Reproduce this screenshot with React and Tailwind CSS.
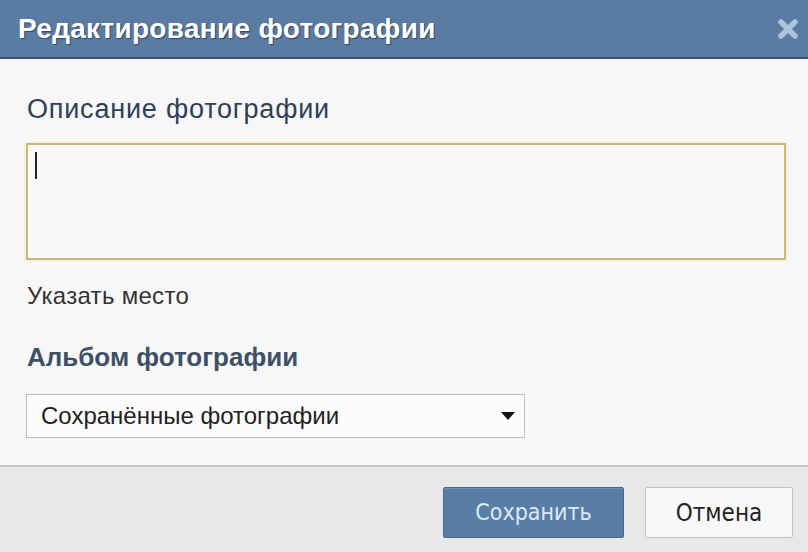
import { useState } from "react";

function CloseIcon() {
  return (
    <svg width="24" height="24" viewBox="0 0 24 24">
      <path
        d="M5 5 L19 19 M19 5 L5 19"
        stroke="#aec2da"
        strokeWidth="5.5"
        strokeLinecap="round"
      />
    </svg>
  );
}

export default function App() {
  const [description, setDescription] = useState("");
  const [album, setAlbum] = useState("saved");

  return (
    <div
      className="w-[808px] h-[552px] flex flex-col bg-[#f7f7f7] overflow-hidden"
      style={{ fontFamily: '"Liberation Sans", Arial, sans-serif' }}
    >
      <header className="h-[59px] shrink-0 flex items-center justify-between pl-[18px] pr-[8px] bg-[#5a7ba2] border-b-2 border-[#3b526e]">
        <h1 className="text-[28px] leading-[34px] font-bold text-white tracking-[0.3px] [text-shadow:1px_1px_1px_rgba(30,50,80,0.7)]">
          Редактирование фотографии
        </h1>
        <CloseIcon />
      </header>

      <main className="flex-1 flex flex-col px-[26px] pt-[34px]">
        <label
          htmlFor="description"
          className="text-[27px] leading-[32px] tracking-[0.8px] text-[#2c4059] ml-[1px]"
        >
          Описание фотографии
        </label>
        <div className="relative mt-[18px] mr-[-4px]">
          <textarea
            id="description"
            className="block w-[760px] h-[117px] resize-none bg-[#f9f9f8] border-2 border-[#c9b979] outline-none shadow-[0_0_3px_rgba(240,220,120,0.6)] px-[8px] py-[6px] text-[18px]"
            value={description}
            onChange={(e) => setDescription(e.target.value)}
          />
          <span className="absolute left-[9px] top-[9px] w-[2px] h-[27px] bg-[#222]" />
        </div>

        <span className="mt-[21px] ml-[1px] text-[24px] leading-[30px] tracking-[0.3px] text-[#333]">
          Указать место
        </span>

        <span className="mt-[30px] ml-[1px] text-[26px] leading-[32px] font-bold text-[#3d5068]">
          Альбом фотографии
        </span>

        <div className="relative mt-[21px] w-[499px] h-[44px] border border-[#bdbdbd] bg-[#fbfbfb] flex items-center justify-between pl-[14px] pr-[8px]">
          <span className="text-[24px] text-[#222]">
            {album === "saved" ? "Сохранённые фотографии" : album}
          </span>
          <svg width="16" height="10" viewBox="0 0 16 10">
            <path d="M1 1 L15 1 L8 9 Z" fill="#111" />
          </svg>
          <select
            className="absolute inset-0 opacity-0"
            value={album}
            onChange={(e) => setAlbum(e.target.value)}
          >
            <option value="saved">Сохранённые фотографии</option>
          </select>
        </div>
      </main>

      <footer className="h-[87px] shrink-0 flex items-start justify-end gap-[21px] pt-[20px] pr-[15px] bg-[#e9e8e8] border-t-2 border-[#c6c6c6]">
        <button
          className="w-[181px] h-[51px] bg-[#5a7da6] border border-[#46688f] rounded-[2px] text-[23px] text-[#dceaf6] shadow-[inset_0_1px_0_rgba(255,255,255,0.15)]"
          style={{ fontFamily: '"DejaVu Sans Condensed", "DejaVu Sans", sans-serif' }}
        >
          Сохранить
        </button>
        <button
          className="w-[148px] h-[51px] bg-[#f8f8f8] border border-[#c2c2c2] rounded-[2px] text-[24px] text-[#222]"
          style={{ fontFamily: '"DejaVu Sans Condensed", "DejaVu Sans", sans-serif' }}
        >
          Отмена
        </button>
      </footer>
    </div>
  );
}
